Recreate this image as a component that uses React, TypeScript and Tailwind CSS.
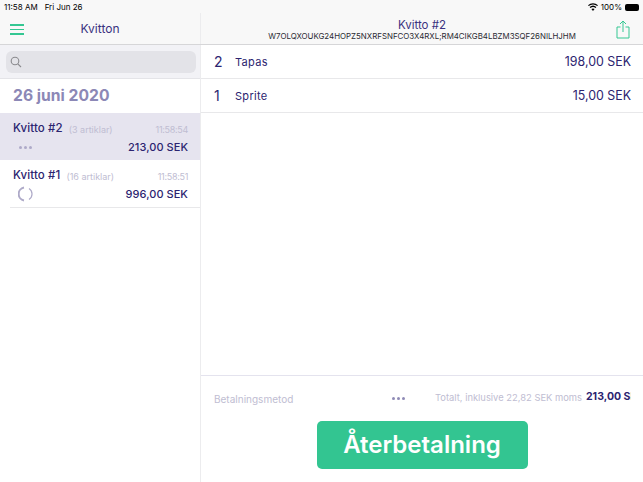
import React from "react";

const font = { fontFamily: "Inter, 'Liberation Sans', sans-serif" };

function Dots({ cls }: { cls: string }) {
  return (
    <div className="flex gap-[2px]">
      <span className={`w-[3px] h-[3px] rounded-full ${cls}`} />
      <span className={`w-[3px] h-[3px] rounded-full ${cls}`} />
      <span className={`w-[3px] h-[3px] rounded-full ${cls}`} />
    </div>
  );
}

function Receipt({ title, count, time, total, selected, children }: { title: string; count: string; time: string; total: string; selected?: boolean; children: React.ReactNode }) {
  return (
    <div className={`h-[47px] pl-[13px] pr-[12px] pt-[9px] ${selected ? "bg-[#e6e4ef]" : ""}`}>
      <div className="flex items-center h-[14px]">
        <span className="text-[11.5px] font-medium text-[#2c2470] leading-none tracking-[0.1px]">{title}</span>
        <span className="ml-[6px] text-[9px] text-[#c0bdd2] leading-none">{count}</span>
        <span className="ml-auto text-[9px] text-[#c0bdd2] leading-none tracking-[-0.3px]">{time}</span>
      </div>
      <div className="flex items-center justify-between h-[20px] mt-[1px]">
        <div className="flex items-center justify-center w-[25px]">{children}</div>
        <span className="text-[11px] font-medium text-[#2c2470] leading-none tracking-[0.05px]">{total}</span>
      </div>
    </div>
  );
}

function Line({ qty, name, price }: { qty: string; name: string; price: string }) {
  return (
    <div className="h-[34px] border-b border-[#e8e8ea] flex items-center pl-[13px] pr-[12px] pt-[1px] text-[#2c2470]">
      <span className="w-[21px] text-[14px] leading-none">{qty}</span>
      <span className="text-[11px] leading-none tracking-[0.3px]">{name}</span>
      <span className="ml-auto text-[12.4px] leading-none">{price}</span>
    </div>
  );
}

export default function App() {
  return (
    <div className="w-[643px] h-[482px] overflow-hidden bg-white flex flex-col" style={font}>
      <div className="h-[45px] shrink-0 bg-[#f8f8f8] border-b border-[#d6d6d8] flex flex-col">
        <div className="h-[13px] flex items-center justify-between pl-[4px] pr-[4px] text-[8px] text-black leading-none pt-[1px]">
          <div className="flex gap-[7px]"><span>11:58 AM</span><span>Fri Jun 26</span></div>
          <div className="flex items-center gap-[3px]">
            <svg width="10" height="8" viewBox="0 0 10 8" fill="#000"><path d="M5 8 L3.4 6.1 A2.4 2.4 0 0 1 6.6 6.1 Z M2.5 5.1 L1.6 4 A5 5 0 0 1 8.4 4 L7.5 5.1 A3.6 3.6 0 0 0 2.5 5.1 Z M0.8 3.1 L0 2.2 A7.4 7.4 0 0 1 10 2.2 L9.2 3.1 A6.2 6.2 0 0 0 0.8 3.1 Z" /></svg>
            <span>100%</span>
            <div className="w-[14px] h-[7px] rounded-[2px] bg-black" />
          </div>
        </div>
        <div className="flex flex-1 min-h-0">
          <div className="w-[201px] shrink-0 relative flex items-center justify-center border-r border-[#ececee]">
            <div className="absolute left-[10px] top-[11px] w-[14px] flex flex-col gap-[3px]">
              <span className="h-[1.5px] bg-[#34c792]" />
              <span className="h-[1.5px] bg-[#34c792]" />
              <span className="h-[1.5px] bg-[#34c792]" />
            </div>
            <span className="text-[12px] text-[#3a3280] leading-none">Kvitton</span>
          </div>
          <div className="flex-1 relative flex flex-col items-center pt-[6px]">
            <span className="text-[11.5px] text-[#3a3280] leading-[12px]">Kvitto #2</span>
            <span className="text-[7.9px] text-[#2b2b33] leading-[11px] whitespace-nowrap">W7OLQXOUKG24HOPZ5NXRFSNFCO3X4RXL;RM4CIKGB4LBZM3SQF26NILHJHM</span>
            <svg className="absolute right-[13px] top-[7px]" width="14" height="19" viewBox="0 0 14 19" fill="none" stroke="#34c792" strokeWidth="1">
              <path d="M4.5 7 H1 V18 H13 V7 H9.5" />
              <path d="M7 12 V1 M4 4 L7 1 L10 4" />
            </svg>
          </div>
        </div>
      </div>

      <div className="flex flex-1 min-h-0">
        <div className="w-[201px] shrink-0 border-r border-[#ececee] flex flex-col">
          <div className="h-[34px] bg-[#f2f2f6] border-b border-[#e4e4e8] pl-[6px] pr-[4px] pt-[6px]">
            <div className="h-[22px] rounded-[6px] bg-[#e3e3e8] flex items-center pl-[4px]">
              <svg width="12" height="12" viewBox="0 0 12 12" fill="none" stroke="#8a8a8e" strokeWidth="1.1">
                <circle cx="5" cy="5" r="3.8" />
                <path d="M7.8 7.8 L11 11" />
              </svg>
            </div>
          </div>
          <div className="h-[34px] flex items-center pl-[13px]">
            <span className="text-[15.7px] font-bold text-[#8c88b6] leading-none">26 juni 2020</span>
          </div>
          <Receipt title="Kvitto #2" count="(3 artiklar)" time="11:58:54" total="213,00 SEK" selected>
            <Dots cls="bg-[#aeaac8]" />
          </Receipt>
          <Receipt title="Kvitto #1" count="(16 artiklar)" time="11:58:51" total="996,00 SEK">
            <svg width="16" height="16" viewBox="0 0 16 16" fill="none" stroke="#aeaac8" strokeWidth="2">
              <path d="M6 1.6 A6.5 6.5 0 0 0 6 14.4" />
              <path d="M11 2.5 A6.5 6.5 0 0 1 11 13.5" strokeWidth="1.2" />
            </svg>
          </Receipt>
          <div className="ml-[10px] border-b border-[#e8e8ea]" />
        </div>

        <div className="flex-1 min-w-0 flex flex-col">
          <div className="flex-1">
            <Line qty="2" name="Tapas" price="198,00 SEK" />
            <Line qty="1" name="Sprite" price="15,00 SEK" />
          </div>
          <div className="h-[107px] shrink-0 border-t border-[#e4e3ee] flex flex-col">
            <div className="h-[45px] relative flex items-center pl-[13px] whitespace-nowrap overflow-hidden">
              <span className="text-[10px] text-[#c0bdd2] leading-none">Betalningsmetod</span>
              <div className="absolute left-[191px] top-[21px]"><Dots cls="bg-[#8f8bb6]" /></div>
              <span className="absolute left-[234px] top-[17px] text-[9.4px] text-[#c0bdd2] leading-none">Totalt, inklusive 22,82 SEK moms</span>
              <span className="absolute left-[385px] top-[16px] w-[45px] overflow-hidden text-[10.5px] font-bold text-[#2c2470] leading-none">213,00 SEK</span>
            </div>
            <div className="flex justify-center">
              <div className="w-[211px] h-[48px] rounded-[5px] bg-[#33c591] flex items-center justify-center">
                <span className="text-[24px] font-semibold text-white leading-none">Återbetalning</span>
              </div>
            </div>
          </div>
        </div>
      </div>
    </div>
  );
}
